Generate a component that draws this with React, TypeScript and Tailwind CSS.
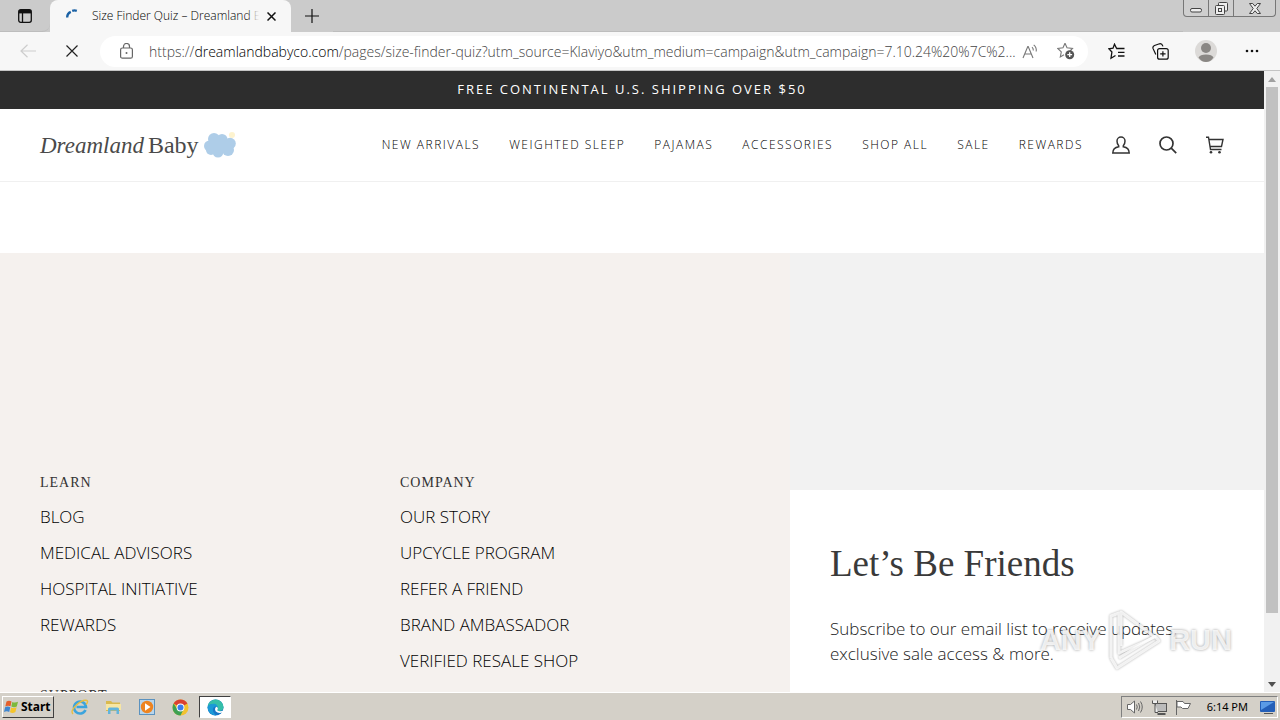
import React from 'react';

const sans = "font-['Open_Sans','Noto_Sans',sans-serif]";
const serif = "font-['Liberation_Serif',serif]";

const navLinks = ['New Arrivals', 'Weighted Sleep', 'Pajamas', 'Accessories', 'Shop All', 'Sale', 'Rewards'];

const learnLinks = ['Blog', 'Medical Advisors', 'Hospital Initiative', 'Rewards'];
const companyLinks = ['Our Story', 'Upcycle Program', 'Refer a Friend', 'Brand Ambassador', 'Verified Resale Shop'];

export default function App() {
  return (
    <div className={`relative h-screen flex flex-col overflow-hidden bg-white text-black ${sans}`}>
      <TabStrip />
      <Toolbar />
      <div className="flex-1 min-h-0 flex">
        <main className="flex-1 min-w-0 overflow-hidden flex flex-col">
          <p className="h-[38px] shrink-0 flex items-center justify-center bg-[#2d2d2d] text-white text-[13px] tracking-[2px] uppercase">
            Free Continental U.S. Shipping Over $50
          </p>
          <SiteHeader />
          <div className="h-[71px] shrink-0" />
          <SiteFooter />
        </main>
        <Scrollbar />
      </div>
      <Taskbar />
      <Watermark />
    </div>
  );
}

/* Browser tabs */
const TabStrip = () => (
  <div className="h-8 shrink-0 flex bg-[#cbcbcb]">
    <button aria-label="Tab actions" className="w-[50px] flex items-center justify-center rounded-br-lg border-b border-[#bdbdbd]">
      <svg width="14" height="14" viewBox="0 0 14 14" fill="none" stroke="#111" strokeWidth="1.3">
        <rect x="0.7" y="0.7" width="12.6" height="12.6" rx="2" />
        <path d="M1 2.7h12" strokeWidth="3.4" />
        <path d="M4.5 3v10" />
      </svg>
    </button>
    <div className="w-[241px] flex items-center rounded-t-lg bg-[#f7f7f7] pl-4 pr-[11px]">
      <svg className="shrink-0" width="14" height="14" viewBox="0 0 14 14" fill="none" stroke="#1b62a5" strokeWidth="2.4">
        <path d="M1.2 8.5a6 6 0 0 1 3.6-5.6" />
        <path d="M6.2 1.8a7 7 0 0 1 4.6 0" />
      </svg>
      <div className="relative flex-1 min-w-0 ml-3 overflow-hidden whitespace-nowrap text-[12px] font-light">
        Size Finder Quiz – Dreamland Baby
        <span className="absolute inset-y-0 right-0 w-3 bg-linear-to-r from-transparent to-[#f7f7f7]" />
      </div>
      <button aria-label="Close tab" className="ml-1 p-1">
        <svg width="9" height="9" viewBox="0 0 9 9" stroke="#111" strokeWidth="1.5">
          <path d="M0.5 0.5l8 8M8.5 0.5l-8 8" />
        </svg>
      </button>
    </div>
    <button aria-label="New tab" className="w-[42px] flex items-center justify-center">
      <svg width="14" height="14" viewBox="0 0 14 14" stroke="#111" strokeWidth="1.2">
        <path d="M7 0v14M0 7h14" />
      </svg>
    </button>
    <div className="flex-1 border-b border-[#bdbdbd]" />
    <div className="h-[17px] mr-1 flex border border-t-0 border-[#777] rounded-b bg-[#cfcfcf]">
      <button aria-label="Minimize" className="w-[25px] flex items-center justify-center border-r border-[#777]">
        <svg width="12" height="10" viewBox="0 0 12 10" fill="#eee" stroke="#444">
          <rect x="0.5" y="5.5" width="11" height="3.5" rx="1.5" />
        </svg>
      </button>
      <button aria-label="Restore" className="w-[25px] flex items-center justify-center border-r border-[#777]">
        <svg width="13" height="13" viewBox="0 0 13 13" fill="#eee" stroke="#444">
          <rect x="3.5" y="0.5" width="9" height="8.5" rx="1" />
          <rect x="0.5" y="3.5" width="9" height="9" rx="1" />
          <rect x="3.5" y="6.5" width="3" height="3" />
        </svg>
      </button>
      <button aria-label="Close" className="w-[41px] flex items-center justify-center">
        <svg width="12" height="11" viewBox="0 0 12 11" fill="#eee" stroke="#444">
          <path d="M0.5 0.5h3.2L6 3.2 8.3 0.5h3.2L7.8 5.5l3.7 5H8.3L6 7.8l-2.3 2.7H0.5l3.7-5z" />
        </svg>
      </button>
    </div>
  </div>
);

/* Address bar row */
const Toolbar = () => (
  <div className="h-[39px] shrink-0 flex items-center bg-[#f7f7f7] border-b border-[#c4c4c4] pl-5 pr-[21px]">
    <button aria-label="Back" className="w-4 text-[#cdcdcd]">
      <svg width="16" height="14" viewBox="0 0 16 14" fill="none" stroke="currentColor" strokeWidth="1.2">
        <path d="M16 7H1M7.5 0.8L1 7l6.5 6.2" />
      </svg>
    </button>
    <button aria-label="Stop" className="ml-[30px]">
      <svg width="12" height="12" viewBox="0 0 12 12" stroke="#222" strokeWidth="1.2">
        <path d="M0.5 0.5l11 11M11.5 0.5l-11 11" />
      </svg>
    </button>
    <div className="ml-[22px] flex-1 min-w-0 h-[31px] flex items-center rounded-full bg-white pl-5 pr-[13px]">
      <svg className="shrink-0" width="13" height="16" viewBox="0 0 13 16" fill="none" stroke="#666" strokeWidth="1.2">
        <rect x="0.6" y="5" width="11.8" height="10.2" rx="1.8" />
        <path d="M3.5 5V3.5a3 3 0 0 1 6 0V5" />
        <circle cx="6.5" cy="10" r="1" fill="#666" stroke="none" />
      </svg>
      <div className="flex-1 min-w-0 ml-4 mr-1 whitespace-nowrap text-[14px] font-light text-[#444]">
        https://<span className="text-black">dreamlandbabyco.com</span>
        /pages/size-finder-quiz?utm_source=Klaviyo&amp;utm_medium=campaign&amp;utm_campaign=7.10.24%20%7C%2...
      </div>
      <button aria-label="Read aloud">
        <svg width="17" height="15" viewBox="0 0 17 15" fill="none" stroke="#777" strokeWidth="1.1">
          <path d="M1 14L5.8 2.5h0.4L11 14M2.8 10h6.4" />
          <path d="M10 3.2q1.5 1.3 1.3 3.3M11.7 0.8q3.2 2.7 2.5 6.7" />
        </svg>
      </button>
      <button aria-label="Add to favorites" className="ml-[18px]">
        <svg width="18" height="18" viewBox="0 0 18 18" fill="none" stroke="#777" strokeWidth="1.1">
          <path d="M8 1.2l2 4.6 5.5 0.6-2.5 2.6M7 12.8L3.3 15l1-5.1L0.8 6.4 6 5.8 8 1.2" />
          <circle cx="12.7" cy="12.7" r="4.5" fill="#555" stroke="none" />
          <path d="M12.7 10.3v4.8M10.3 12.7h4.8" stroke="#fff" strokeWidth="1.3" />
        </svg>
      </button>
    </div>
    <button aria-label="Favorites" className="ml-5">
      <svg width="18" height="17" viewBox="0 0 18 17" fill="none" stroke="#111" strokeWidth="1.3">
        <path d="M8.6 5.5L6.5 1.2 5 5.2 0.9 5.8l3 3.2L3 15.2 7.5 12.5" />
        <path d="M8.2 5.5H16.5M10 9.3h6.5M10 13h6.5" />
      </svg>
    </button>
    <button aria-label="Collections" className="ml-[26px]">
      <svg width="17" height="17" viewBox="0 0 17 17" fill="none" stroke="#111" strokeWidth="1.2">
        <rect x="5.6" y="5.6" width="10.6" height="10.6" rx="2" />
        <path d="M10.9 8.2v5.4M8.2 10.9h5.4" />
        <path d="M3.8 11.5L1 5.4Q0.5 3.3 2.5 2.5L7.5 0.8Q9.8 0.2 11 3.4" />
      </svg>
    </button>
    <button aria-label="Profile" className="ml-[26px]">
      <svg width="22" height="22" viewBox="0 0 22 22">
        <circle cx="11" cy="11" r="11" fill="#dcdad8" />
        <circle cx="11" cy="8" r="5" fill="#8a8784" />
        <path d="M3.5 17.5Q5 14.5 11 14.5t7.5 3Q15.5 22 11 22t-7.5-4.5z" fill="#8a8784" />
      </svg>
    </button>
    <button aria-label="Settings and more" className="ml-7">
      <svg width="14" height="4" viewBox="0 0 14 4" fill="#111">
        <circle cx="2" cy="2" r="1.3" />
        <circle cx="7" cy="2" r="1.3" />
        <circle cx="12" cy="2" r="1.3" />
      </svg>
    </button>
  </div>
);

const SiteHeader = () => (
  <header className="h-[73px] shrink-0 flex items-center justify-between border-b border-[#f0f0f0] px-10">
    <a href="#" className={`flex items-center text-[#4a4a4a] leading-none ${serif}`}>
      <span className="text-[23px] italic">Dreamland</span>
      <span className="ml-1 text-[24px]">Baby</span>
      <svg className="ml-1" width="34" height="30" viewBox="0 0 34 30">
        <circle cx="29" cy="5" r="3" fill="#fdf3cf" />
        <g fill="#aecde8">
          <circle cx="6.5" cy="16" r="5.5" />
          <circle cx="11" cy="9" r="6" />
          <circle cx="19" cy="9.5" r="5.5" />
          <circle cx="27" cy="13.5" r="5.8" />
          <circle cx="8" cy="20" r="5" />
          <circle cx="15" cy="22" r="5.5" />
          <circle cx="25" cy="20" r="6" />
          <rect x="8" y="9" width="18" height="13" />
        </g>
      </svg>
    </a>
    <nav className="flex items-center gap-[29px] text-[12px] font-light tracking-[1.5px] uppercase text-black">
      {navLinks.map((label) => (
        <a key={label} href="#">{label}</a>
      ))}
      <div className="flex items-center gap-[29px]">
        <a href="#" aria-label="Account">
          <svg width="18" height="18" viewBox="0 0 18 18" fill="none" stroke="#333" strokeWidth="1.5">
            <path d="M6.7 9.8C5.2 8.3 5 6.7 5 5a4 4 0 0 1 8 0c0 1.7-0.2 3.3-1.7 4.8v1c3.5 0.6 5.9 2 5.9 6.2H0.8c0-4.2 2.4-5.6 5.9-6.2z" />
          </svg>
        </a>
        <a href="#" aria-label="Search">
          <svg width="18" height="18" viewBox="0 0 18 18" fill="none" stroke="#333" strokeWidth="1.7">
            <circle cx="7.5" cy="7.5" r="6.5" />
            <path d="M12.2 12.2l5 5" />
          </svg>
        </a>
        <a href="#" aria-label="Cart">
          <svg width="18" height="18" viewBox="0 0 18 18" fill="none" stroke="#333" strokeWidth="1.4">
            <path d="M0 1.2h2.5L4.5 13.5h11M3 3.5h14l-1.5 7H4" />
            <circle cx="5" cy="16.2" r="1.3" fill="#333" stroke="none" />
            <circle cx="13.5" cy="16.2" r="1.3" fill="#333" stroke="none" />
          </svg>
        </a>
      </div>
    </nav>
  </header>
);

const LinkColumn = ({ title, links }: { title: string; links: string[] }) => (
  <section>
    <h2 className={`h-4 text-[14px] leading-4 tracking-[1px] uppercase text-[#333] ${serif}`}>{title}</h2>
    {links.length > 0 && (
      <ul className="mt-2 text-[17px] font-light uppercase">
        {links.map((label) => (
          <li key={label} className="h-9 flex items-center">
            <a href="#">{label}</a>
          </li>
        ))}
      </ul>
    )}
  </section>
);

const SiteFooter = () => (
  <footer className="flex-1 shrink-0 flex bg-[#f5f1ee]">
    <div className="flex-1 grid grid-cols-2 content-start pl-10 pt-[222px] pr-[30px]">
      <div>
        <LinkColumn title="Learn" links={learnLinks} />
        <div className="mt-[45px]">
          <LinkColumn title="Support" links={[]} />
        </div>
      </div>
      <LinkColumn title="Company" links={companyLinks} />
    </div>
    <div className="w-[37.5%] flex flex-col bg-[#f2f2f2] pt-[237px]">
      <section className="flex-1 bg-white px-10 pt-[50px]">
        <h2 className={`text-[37px] leading-[48px] text-[#3a3a3a] ${serif}`}>Let’s Be Friends</h2>
        <p className="mt-7 max-w-[360px] text-[17px] leading-[25px] font-light text-[#222]">
          Subscribe to our email list to receive updates, exclusive sale access &amp; more.
        </p>
      </section>
    </div>
  </footer>
);

const Scrollbar = () => (
  <div className="w-4 shrink-0 flex flex-col items-center bg-[#f1f1f1]">
    <span className="h-4 flex items-center">
      <svg width="8" height="5" viewBox="0 0 8 5" fill="#a0a0a0"><path d="M0 5l4-5 4 5z" /></svg>
    </span>
    <span className="w-3 h-[526px] bg-[#c1c1c1]" />
    <span className="flex-1" />
    <span className="h-4 flex items-center">
      <svg width="8" height="5" viewBox="0 0 8 5" fill="#505050"><path d="M0 0h8L4 5z" /></svg>
    </span>
  </div>
);

/* Windows taskbar */
const Taskbar = () => (
  <div className="h-7 shrink-0 flex items-center bg-[#d4d0c8] shadow-[inset_0_1px_0_#fff] pt-[2px] px-[2px] font-['Noto_Sans',sans-serif]">
    <button className="h-[22px] w-[52px] flex items-center gap-[2px] pl-px border border-t-white border-l-white border-r-[#404040] border-b-[#404040] text-[12px] font-bold">
      <svg className="shrink-0" width="15" height="14" viewBox="0 0 15 14">
        <path d="M2.5 1.5Q5 0 7.5 1.5L6.5 6.3Q4 5 1.3 6.5z" fill="#e5602c" />
        <path d="M8.3 2Q11 3.2 14 1.8L12.8 6.5Q10 8 7.3 6.5z" fill="#7db93c" />
        <path d="M1.1 7.3Q3.5 5.9 6.3 7.2L5.2 12Q2.8 10.6 0 12z" fill="#3f86d0" />
        <path d="M7.1 7.5Q10 8.7 12.6 7.3L11.4 12Q8.8 13.6 6 12.3z" fill="#f5c52c" />
      </svg>
      Start
    </button>
    <button aria-label="Internet Explorer" className="ml-[17px]">
      <svg width="18" height="18" viewBox="0 0 18 18" fill="none">
        <path d="M14.5 12A6 6 0 1 1 15 9H5.5" stroke="#3ca4dd" strokeWidth="2.6" />
        <path d="M2 16Q-1 13 5.5 7T16 2.5q1.5 1.5-1 4" stroke="#e8be42" strokeWidth="1.4" />
      </svg>
    </button>
    <button aria-label="File Explorer" className="ml-4">
      <svg width="17" height="16" viewBox="0 0 17 16">
        <path d="M1 2h5l1.5 1.5H15V12H1z" fill="#d9b94f" />
        <path d="M1 5h15v6H1z" fill="#f7e6a3" />
        <path d="M3 15V10q0-1.5 1.5-1.5h8Q14 8.5 14 10v5h-2.5v-3.5h-6V15z" fill="#62b4dc" />
      </svg>
    </button>
    <button aria-label="Media Player" className="ml-[17px]">
      <svg width="16" height="16" viewBox="0 0 16 16">
        <rect x="0.5" y="0.5" width="15" height="15" fill="#b8d5ec" stroke="#5b92bf" />
        <circle cx="8" cy="8" r="6.2" fill="#ee8421" />
        <path d="M6 4.3L11.5 8 6 11.7z" fill="#fff" />
      </svg>
    </button>
    <button aria-label="Chrome" className="ml-[17px]">
      <svg width="17" height="17" viewBox="0 0 17 17">
        <circle cx="8.5" cy="8.5" r="8" fill="#f2c230" />
        <path d="M8.5 8.5L1.6 4.5a8 8 0 0 1 13.8 0z" fill="#da4032" />
        <path d="M1.6 4.5A8 8 0 0 0 8.5 16.5L11.5 10.5 5.5 10.5z" fill="#3da053" />
        <circle cx="8.5" cy="8.5" r="3.9" fill="#fff" />
        <circle cx="8.5" cy="8.5" r="3" fill="#3b7ded" />
      </svg>
    </button>
    <button aria-label="Edge" className="ml-[10px] h-[22px] w-8 flex items-center justify-center bg-white border border-t-[#404040] border-l-[#404040] border-r-white border-b-white">
      <svg width="17" height="17" viewBox="0 0 17 17">
        <circle cx="8.5" cy="8.5" r="8" fill="#1676c6" />
        <path d="M0.6 7.5A8 8 0 0 1 16.5 8c0 3-2.5 4-4.5 4-1.5 0-2.5-0.7-1.5-1.7C11.5 7 8.5 5 5.5 5.2 3 5.3 1.3 6.3 0.6 7.5z" fill="#35bfa9" />
        <path d="M0.6 8A7 6 0 0 1 7 4.7Q10 5 10.8 8 7 6.5 6 9.5t3 6.9A8 8 0 0 1 0.6 8z" fill="#1b9ad7" />
        <path d="M9.2 7.8q2.5 1 1.3 2.8-0.8 1.6 2.5 1.7 2.5 0 4-1.5l-0.800 2.200Q13 14.500 10.500 13.500 8 12.500 8 10.500q0-1.700 1.200-2.700z" fill="#fff" />
      </svg>
    </button>
    <div className="ml-auto h-[22px] flex items-center border border-t-[#808080] border-l-[#808080] border-r-white border-b-white pl-[5px] pr-[2px]">
      <svg width="16" height="14" viewBox="0 0 16 14" fill="#fff" stroke="#666">
        <path d="M0.5 4.5h3L7.5 1v12L3.5 9.5h-3z" />
        <path d="M9.5 4.5q1.5 2.5 0 5M11.5 3q2.5 4 0 8M13.5 1.5q3.5 5.5 0 11" fill="none" />
      </svg>
      <svg className="ml-2" width="16" height="15" viewBox="0 0 16 15" fill="#fff" stroke="#555">
        <rect x="4.5" y="3.5" width="11" height="8" fill="#bbb" />
        <path d="M6.5 14h8" strokeWidth="2" />
        <path d="M1.5 0.5v3h5v-3M4 4v8.5h3" fill="#eee" />
      </svg>
      <svg className="ml-2" width="16" height="15" viewBox="0 0 16 15" fill="#fff" stroke="#666">
        <path d="M1.5 0v15" />
        <path d="M2 1.5h6l1.5 2h6L13 8.5H7.5L6 7H2z" />
      </svg>
      <span className="ml-4 text-[11px]">6:14 PM</span>
      <svg className="ml-3" width="15" height="13" viewBox="0 0 15 13">
        <rect width="15" height="11" rx="1" fill="#245fb8" />
        <path d="M1 1h13L1 9z" fill="#5b9be6" />
        <path d="M4 12.5h9" stroke="#555" />
      </svg>
    </div>
  </div>
);

const Watermark = () => (
  <div className="pointer-events-none absolute right-12 bottom-12 flex items-center gap-[6px] text-[29px] leading-none font-bold text-white/80 [text-shadow:0_0_3px_#0006] font-['Liberation_Sans',sans-serif]">
    <span>ANY</span>
    <svg className="drop-shadow-[0_0_1px_#0006]" width="56" height="64" viewBox="0 0 56 64" fill="none" stroke="#fff" strokeOpacity="0.8" strokeWidth="3" strokeLinejoin="round">
      <path d="M4 50V8l8-3v40l36-16L14 4v34" />
      <path d="M4 50l6 10 42-27-4-5L12 50" />
    </svg>
    <span>RUN</span>
  </div>
);
